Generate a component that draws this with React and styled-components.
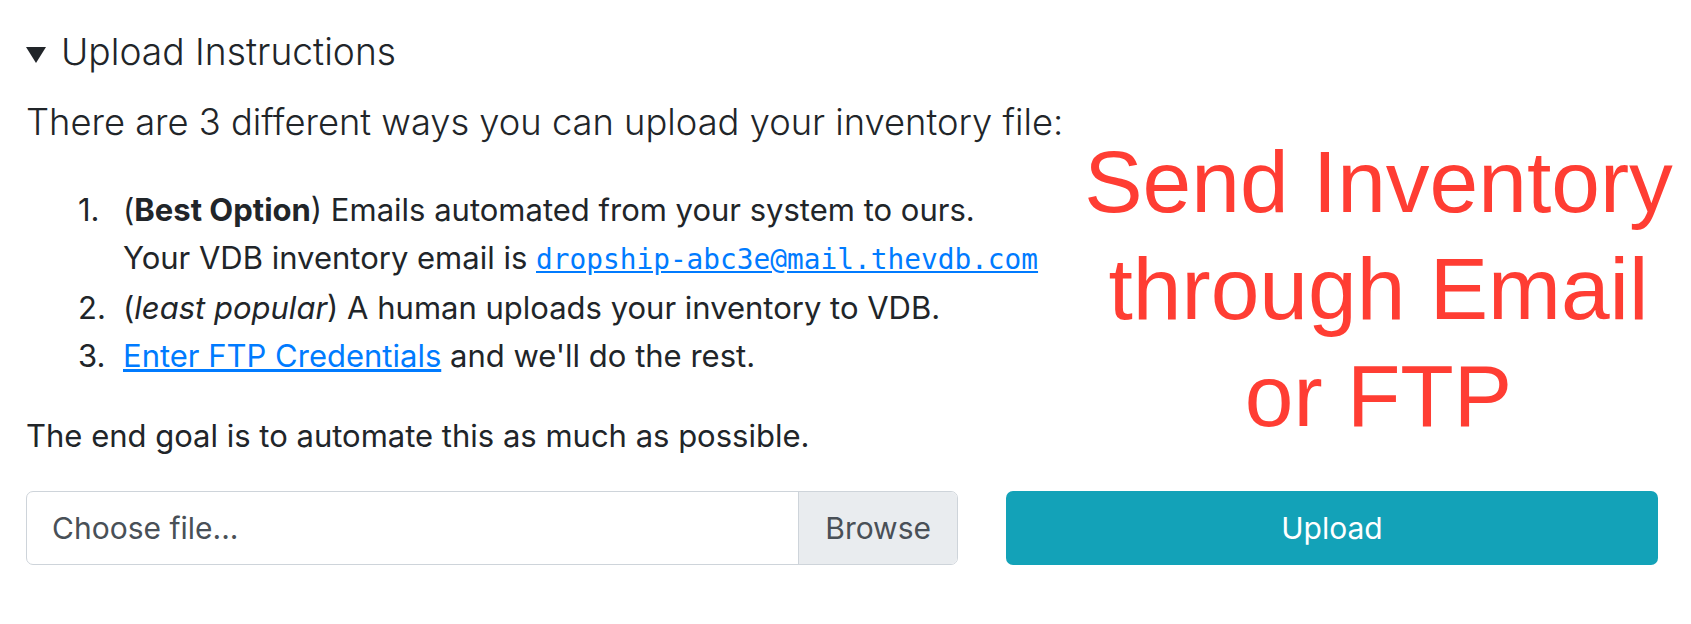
import React from "react";
import styled, { createGlobalStyle } from "styled-components";

const GlobalStyle = createGlobalStyle`
  body {
    margin: 0;
    background: #fff;
    color: #212529;
    font-family: Inter, "Liberation Sans", Arial, sans-serif;
  }
`;

const Page = styled.div`
  padding: 29px 33px 0 26px;
`;

const Top = styled.div`
  display: flex;
`;

const Left = styled.div`
  width: 1040px;
  flex: none;
`;

const Summary = styled.div`
  display: flex;
  align-items: center;
  font-size: 37.2px;
  font-weight: 300;
  line-height: 46px;
`;

const Caret = styled.span`
  width: 0;
  height: 0;
  border-left: 10px solid transparent;
  border-right: 10px solid transparent;
  border-top: 16px solid #212529;
  margin: 6px 15px 0 0;
`;

const Lead = styled.p`
  margin: 24px 0 0;
  font-size: 36.3px;
  font-weight: 300;
  line-height: 46px;
  white-space: nowrap;
`;

const Steps = styled.ol`
  list-style: none;
  margin: 41px 0 0 52px;
  padding: 0;
  font-size: 31px;
  line-height: 48px;
`;

const Step = styled.li`
  display: flex;
`;

const Num = styled.span`
  width: 45px;
  flex: none;
`;

const Link = styled.a`
  color: #007bff;
  text-decoration: underline;
`;

const Mono = styled(Link)`
  font-family: "DejaVu Sans Mono", "Liberation Mono", monospace;
  font-size: 27.8px;
`;

const Goal = styled.p`
  margin: 32px 0 0;
  font-size: 31px;
  line-height: 48px;
`;

const Note = styled.div`
  flex: 1;
  margin-right: -33px;
  padding-top: 100px;
  text-align: center;
  white-space: nowrap;
  font-family: "Liberation Sans", Arial, sans-serif;
  font-size: 87.5px;
  line-height: 107px;
  color: #ff3d33;
`;

const Controls = styled.div`
  display: grid;
  grid-template-columns: 932px 1fr;
  gap: 48px;
  margin-top: 31px;
`;

const FileField = styled.div`
  display: flex;
  height: 74px;
  box-sizing: border-box;
  border: 1px solid #ced4da;
  border-radius: 7px;
  overflow: hidden;
  font-size: 30px;
  color: #495057;
`;

const FileLabel = styled.span`
  flex: 1;
  display: flex;
  align-items: center;
  padding-left: 25px;
`;

const Browse = styled.span`
  display: flex;
  align-items: center;
  padding: 0 26px;
  background: #e9ecef;
  border-left: 1px solid #ced4da;
`;

const Upload = styled.button`
  height: 74px;
  border: none;
  border-radius: 7px;
  background: #13a2b8;
  color: #fff;
  font-family: inherit;
  font-size: 30px;
`;

export default function App() {
  return (
    <Page>
      <GlobalStyle />
      <Top>
        <Left>
          <Summary>
            <Caret />
            Upload Instructions
          </Summary>
          <Lead>There are 3 different ways you can upload your inventory file:</Lead>
          <Steps>
            <Step>
              <Num>1.</Num>
              <span>
                (<b>Best Option</b>) Emails automated from your system to ours.
                <br />
                Your VDB inventory email is{" "}
                <Mono href="#">dropship-abc3e@mail.thevdb.com</Mono>
              </span>
            </Step>
            <Step>
              <Num>2.</Num>
              <span>
                (<i>least popular</i>) A human uploads your inventory to VDB.
              </span>
            </Step>
            <Step>
              <Num>3.</Num>
              <span>
                <Link href="#">Enter FTP Credentials</Link> and we'll do the rest.
              </span>
            </Step>
          </Steps>
          <Goal>The end goal is to automate this as much as possible.</Goal>
        </Left>
        <Note>
          Send Inventory
          <br />
          through Email
          <br />
          or FTP
        </Note>
      </Top>
      <Controls>
        <FileField>
          <FileLabel>Choose file...</FileLabel>
          <Browse>Browse</Browse>
        </FileField>
        <Upload>Upload</Upload>
      </Controls>
    </Page>
  );
}
